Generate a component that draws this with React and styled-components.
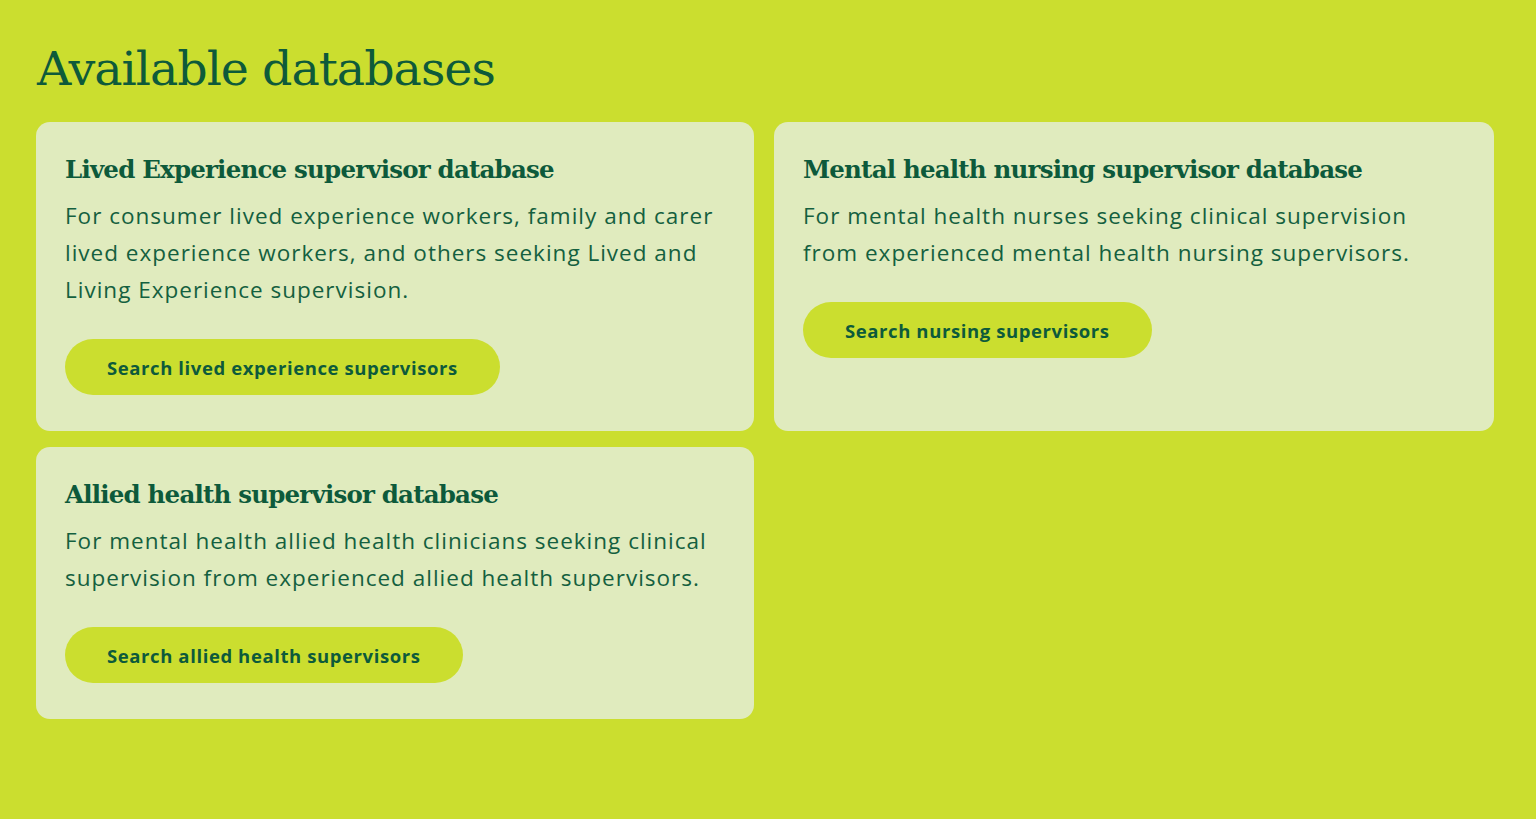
import React from 'react'
import styled, { createGlobalStyle } from 'styled-components'

const GlobalStyle = createGlobalStyle`
    html, body {
        margin: 0;
        padding: 0;
        background: #cbde2f;
    }
`

const Page = styled.div`
    min-height: 819px;
    box-sizing: border-box;
    padding: 36px 43px 40px 36px;
    background: #cbde2f;
    color: #0d5a3b;
`

const Heading = styled.h1`
    margin: 0 0 20px 1px;
    font-family: "DejaVu Serif", serif;
    font-weight: 300;
    font-size: 47.5px;
    line-height: 66px;
    letter-spacing: -1px;
    color: #0e5a3a;
`

const Grid = styled.div`
    display: grid;
    grid-template-columns: 718px 720px;
    column-gap: 20px;
    row-gap: 16px;
`

const Card = styled.div`
    background: #e0ebbe;
    border-radius: 14px;
    padding: 30px 29px 36px 29px;
    box-sizing: border-box;
`

const CardTitle = styled.h2`
    margin: 0 0 9px 0;
    font-family: "DejaVu Serif", serif;
    font-weight: 700;
    font-size: 24.5px;
    line-height: 36px;
    letter-spacing: -0.8px;
    color: #0d5a3b;
`

const CardText = styled.p`
    margin: 0 0 31px 0;
    font-family: "Open Sans", sans-serif;
    font-size: 22.5px;
    line-height: 37px;
    letter-spacing: 1px;
    color: #14603f;
`

const SearchButton = styled.button`
    display: inline-flex;
    align-items: center;
    height: 56px;
    padding: 0 42px;
    border: none;
    border-radius: 28px;
    background: #cbde2f;
    color: #0d5a3b;
    font-family: "Open Sans", sans-serif;
    font-weight: 700;
    font-size: 18.5px;
    letter-spacing: 0.6px;
    cursor: pointer;
`

const databases = [
    {
        title: 'Lived Experience supervisor database',
        text: 'For consumer lived experience workers, family and carer lived experience workers, and others seeking Lived and Living Experience supervision.',
        button: 'Search lived experience supervisors',
    },
    {
        title: 'Mental health nursing supervisor database',
        text: 'For mental health nurses seeking clinical supervision from experienced mental health nursing supervisors.',
        button: 'Search nursing supervisors',
    },
    {
        title: 'Allied health supervisor database',
        text: 'For mental health allied health clinicians seeking clinical supervision from experienced allied health supervisors.',
        button: 'Search allied health supervisors',
    },
]

export default function App() {
    return (
        <Page>
            <GlobalStyle />
            <Heading>Available databases</Heading>
            <Grid>
                {databases.map(db => (
                    <Card key={db.title}>
                        <CardTitle>{db.title}</CardTitle>
                        <CardText>{db.text}</CardText>
                        <SearchButton>{db.button}</SearchButton>
                    </Card>
                ))}
            </Grid>
        </Page>
    )
}
